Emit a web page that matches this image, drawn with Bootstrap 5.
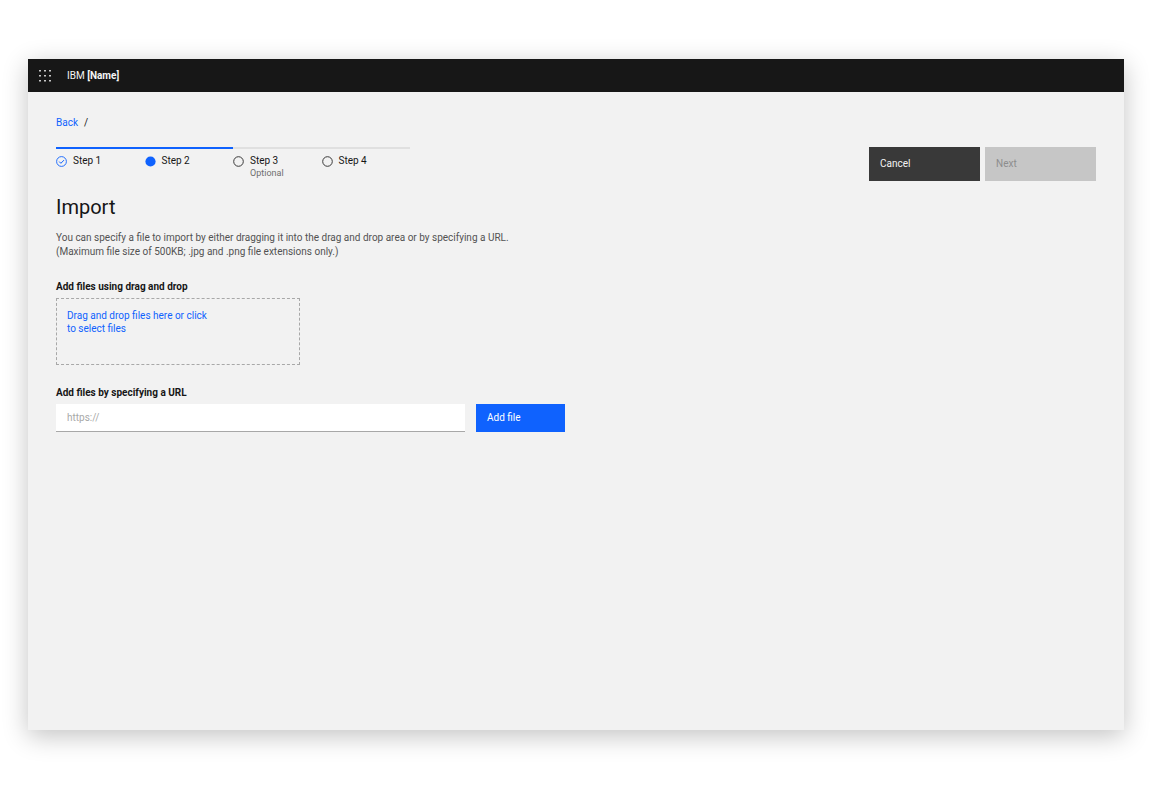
<!DOCTYPE html>
<html lang="en">
<head>
<meta charset="utf-8">
<meta name="viewport" content="width=device-width, initial-scale=1">
<title>IBM [Name] – Import</title>
<link href="https://cdn.jsdelivr.net/npm/bootstrap@5.3.0/dist/css/bootstrap.min.css" rel="stylesheet">
<style>
  body { font-family: Roboto, "Noto Sans", sans-serif; font-size: 10px; line-height: 14px; color: #161616; background: #fff; padding: 59px 28px 58px; }
  .app-frame { background: #f2f2f2; box-shadow: 0 6px 24px rgba(0,0,0,.24); }
  .app-header { background: #171717; height: 33px; padding: 0 10px; gap: 15px; }
  .app-header .btn, .app-header .navbar-brand { color: #f4f4f4; font-size: 10px; line-height: 14px; }
  .app-main { padding: 24px 28px; }
  a { color: #0f62fe; text-decoration: none; }
  .breadcrumb { font-size: 10px; line-height: 14px; gap: 6px; margin-bottom: 17px; }
  .wizard-steps { width: 354px; border-top: 2px solid #e0e0e0; }
  .wizard-step { flex: 1; gap: 6px; padding-top: 5px; }
  .wizard-step.reached { border-top: 2px solid #0f62fe; margin-top: -2px; }
  .wizard-step svg { margin-top: 2px; flex: none; }
  .wizard-step small { font-size: 9px; line-height: 10px; color: #6f6f6f; }
  .wizard-actions { gap: 5px; }
  .action { border: 0; border-radius: 0; font-size: 10px; line-height: 14px; text-align: left; padding: 0 11px; color: #fff; height: 34px; width: 111px; }
  .action-dark, .action-dark:hover { background: #393939; color: #f4f4f4; }
  .action:disabled { background: #c6c6c6; color: #8d8d8d; opacity: 1; }
  .action-blue, .action-blue:hover { background: #0f62fe; color: #fff; height: 28px; width: 89px; }
  h1 { font-size: 20px; line-height: 24px; font-weight: 400; margin: 14px 0 12px; }
  .intro { color: #525252; margin-bottom: 21px; }
  .field-label { font-size: 10px; line-height: 14px; font-weight: 700; margin-bottom: 4px; }
  .drop-area { width: 244px; height: 67px; border: 1px dashed #a8a8a8; border-radius: 0; color: #0f62fe; font-size: 10px; line-height: 13px; padding: 10px; text-align: left; margin-bottom: 21px; }
  .drop-area:hover { color: #0043ce; border-color: #0f62fe; }
  .url-row { gap: 11px; }
  .url-row .form-control { width: 409px; height: 28px; border: 0; border-bottom: 1px solid #a8a8a8; border-radius: 0; padding: 0 11px; font-size: 10px; }
  .form-control::placeholder { color: #a8a8a8; }
</style>
</head>
<body class="min-vh-100 d-flex flex-column">
<div class="app-frame flex-grow-1">
  <header class="app-header navbar flex-nowrap justify-content-start">
    <button class="btn p-0 border-0 d-flex" type="button" aria-label="Switch application">
      <svg width="14" height="14" viewBox="0 0 14 14" fill="#f4f4f4"><path d="M1.2 1h1.6v1.6H1.2zM6.2 1h1.6v1.6H6.2zM11.2 1h1.6v1.6h-1.6zM1.2 6h1.6v1.6H1.2zM6.2 6h1.6v1.6H6.2zM11.2 6h1.6v1.6h-1.6zM1.2 11h1.6v1.6H1.2zM6.2 11h1.6v1.6H6.2zM11.2 11h1.6v1.6h-1.6z"/></svg>
    </button>
    <a class="navbar-brand p-0 m-0" href="#">IBM <strong class="fw-bold">[Name]</strong></a>
  </header>
  <main class="app-main">
    <nav class="breadcrumb" aria-label="Breadcrumb"><a href="#">Back</a><span>/</span></nav>
    <div class="d-flex justify-content-between align-items-start">
      <ol class="wizard-steps list-unstyled d-flex mb-0">
        <li class="wizard-step reached d-flex align-items-start">
          <svg width="11" height="11" viewBox="0 0 11 11" fill="none" stroke="#0f62fe"><circle cx="5.5" cy="5.5" r="4.9" stroke-width=".9"/><path d="M3.2 5.6 4.9 7.3 8 4.1"/></svg>
          <span>Step 1</span>
        </li>
        <li class="wizard-step reached d-flex align-items-start" aria-current="step">
          <svg width="11" height="11" viewBox="0 0 11 11" fill="#0f62fe"><circle cx="5.5" cy="5.5" r="5.1"/></svg>
          <span>Step 2</span>
        </li>
        <li class="wizard-step d-flex align-items-start">
          <svg width="11" height="11" viewBox="0 0 11 11" fill="none" stroke="#393939"><circle cx="5.5" cy="5.5" r="4.8"/></svg>
          <span class="d-flex flex-column">Step 3<small>Optional</small></span>
        </li>
        <li class="wizard-step d-flex align-items-start">
          <svg width="11" height="11" viewBox="0 0 11 11" fill="none" stroke="#393939"><circle cx="5.5" cy="5.5" r="4.8"/></svg>
          <span>Step 4</span>
        </li>
      </ol>
      <div class="wizard-actions d-flex">
        <button class="btn action action-dark" type="button">Cancel</button>
        <button class="btn action" type="button" disabled>Next</button>
      </div>
    </div>
    <h1>Import</h1>
    <p class="intro">You can specify a file to import by either dragging it into the drag and drop area or by specifying a URL.<br>(Maximum file size of 500KB; .jpg and .png file extensions only.)</p>
    <h2 class="field-label" id="drop-label">Add files using drag and drop</h2>
    <button class="drop-area btn d-flex align-items-start" type="button" aria-describedby="drop-label">Drag and drop files here or click<br>to select files</button>
    <label class="field-label d-block" for="file-url">Add files by specifying a URL</label>
    <div class="url-row d-flex">
      <input class="form-control" id="file-url" type="url" placeholder="https://">
      <button class="btn action action-blue" type="button">Add file</button>
    </div>
  </main>
</div>
<script src="https://cdn.jsdelivr.net/npm/bootstrap@5.3.0/dist/js/bootstrap.bundle.min.js"></script>
</body>
</html>
